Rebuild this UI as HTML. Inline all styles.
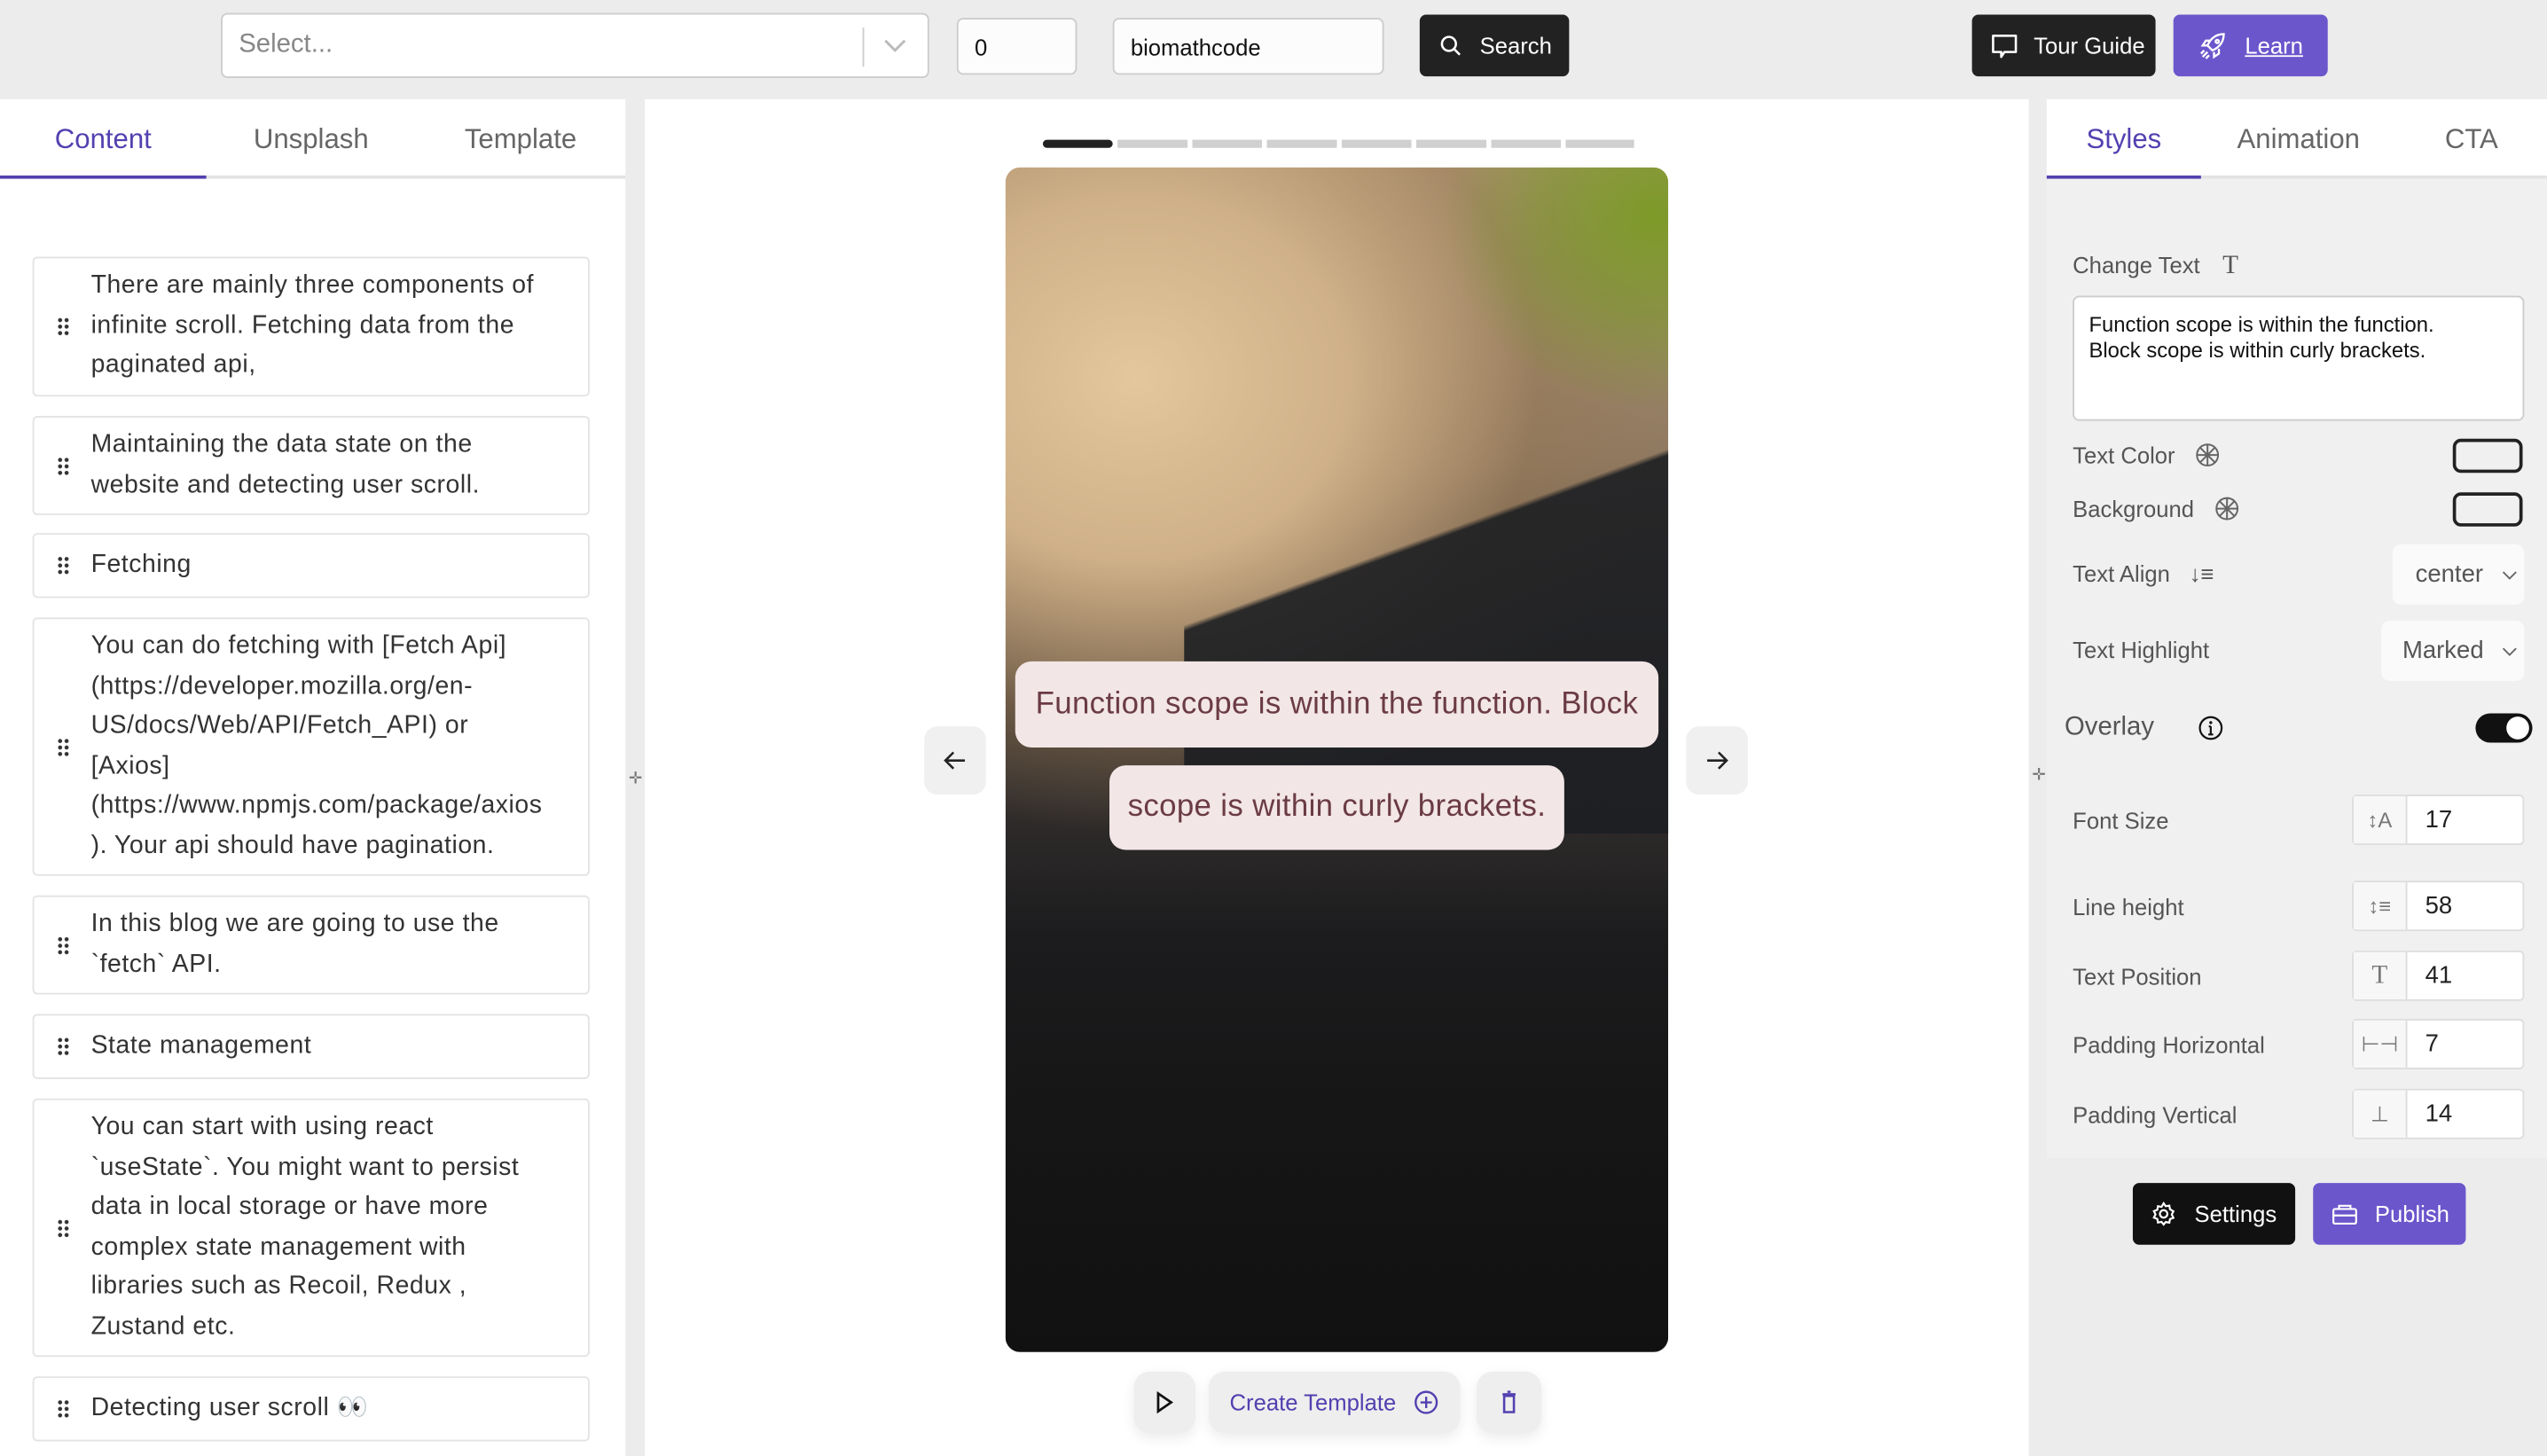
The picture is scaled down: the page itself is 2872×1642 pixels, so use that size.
<!DOCTYPE html>
<html><head><meta charset="utf-8">
<style>
*{box-sizing:border-box;margin:0;padding:0}
html,body{width:2872px;height:1642px;overflow:hidden;background:#ececec}
#root{width:1568px;height:896px;transform:scale(1.83163,1.8326);transform-origin:0 0;position:relative;font-family:"Liberation Sans",Arial,sans-serif;background:#ececec;color:#222}
.abs{position:absolute}
.inp{position:absolute;background:#fff;border:1px solid #ccc;border-radius:4px;font-size:14px;display:flex;align-items:center;padding-left:10px}
.btn{position:absolute;border-radius:4px;display:flex;align-items:center;font-size:14px;color:#fff}
.tabs{display:flex;font-size:17px;color:#666}
.card{position:absolute;left:20px;width:343px;background:#fff;border:1px solid #e3e3e3;border-radius:3px;font-size:15.5px;line-height:24.5px;color:#333;padding:4px 8px 4px 35px;display:flex;align-items:center;letter-spacing:.3px;white-space:nowrap}
.card .h{position:absolute;left:14px;top:50%;margin-top:-6px;width:8px;height:12px;background:radial-gradient(circle,#333 1.1px,transparent 1.4px) 0 0/4px 4px}
.lbl{position:absolute;left:1276px;font-size:14px;color:#555}
.nb{position:absolute;left:1448px;width:106px;height:31px;border:1px solid #ddd;background:#fff;border-radius:3px;display:flex;font-size:15px}
.nb .ic{width:33px;border-right:1px solid #ddd;display:flex;align-items:center;justify-content:center;color:#777;font-size:13px;background:#f7f7f7}
.nb .v{padding-left:11px;display:flex;align-items:center;color:#222}
.sw{position:absolute;left:1510px;width:43px;height:21px;border:2px solid #222;border-radius:5px}
.sel{position:absolute;background:#fafafa;border-radius:5px;font-size:15px;color:#555;display:flex;align-items:center}
</style></head><body><div id="root">

<div class="inp" style="left:136px;top:8px;width:436px;height:40px;color:#888;font-size:16px">Select...</div>
<div class="abs" style="left:531px;top:17px;width:1px;height:24px;background:#ccc"></div>
<svg class="abs" style="left:543px;top:22px" width="16" height="12" viewBox="0 0 16 12"><path d="M2 3l6 6 6-6" fill="none" stroke="#bbb" stroke-width="1.6"/></svg>
<div class="inp" style="left:589px;top:11px;width:74px;height:35px;color:#111;background:#fcfcfc">0</div>
<div class="inp" style="left:685px;top:11px;width:167px;height:35px;color:#111;background:#fcfcfc">biomathcode</div>
<div class="btn" style="left:874px;top:9px;width:92px;height:38px;background:#222;padding-left:12px">
<svg width="14" height="14" viewBox="0 0 14 14"><circle cx="6" cy="6" r="4.3" fill="none" stroke="#fff" stroke-width="1.4"/><path d="M9.2 9.2l3.5 3.5" stroke="#fff" stroke-width="1.4"/></svg><span style="margin-left:11px">Search</span></div>
<div class="btn" style="left:1214px;top:9px;width:113px;height:38px;background:#222;padding-left:11px">
<svg width="18" height="18" viewBox="0 0 18 18"><path d="M2 3h14v10H9l-2 3v-3H2z" fill="none" stroke="#fff" stroke-width="1.4" stroke-linejoin="round"/></svg><span style="margin-left:9px">Tour Guide</span></div>
<div class="btn" style="left:1338px;top:9px;width:95px;height:38px;background:#6b56cc;padding-left:16px">
<svg width="18" height="18" viewBox="0 0 18 18" fill="none" stroke="#fff" stroke-width="1.3"><path d="M7 11l-2-2c2-5 6-7 10-7 0 4-2 8-7 10z"/><circle cx="11" cy="6.5" r="1"/><path d="M5 9H2l2-3h3M9 13v3l3-2v-3M2 16l3-3M4 17l2-2M1 14l2-2"/></svg><span style="margin-left:10px;text-decoration:underline">Learn</span></div>

<div class="abs" style="left:0;top:61px;width:385px;height:835px;background:#fff"></div>
<div class="abs tabs" style="left:0;top:61px;width:385px;height:49px;border-bottom:2px solid #e3e3e3">
<div style="width:127px;text-align:center;padding-top:15px;color:#5340b0;border-bottom:2px solid #5340b0;margin-bottom:-2px">Content</div>
<div style="width:129px;text-align:center;padding-top:15px">Unsplash</div>
<div style="width:129px;text-align:center;padding-top:15px">Template</div></div>
<div class="card" style="top:158px;height:86px"><div class="h"></div><div>There are mainly three components of<br>infinite scroll. Fetching data from the<br>paginated api,</div></div>
<div class="card" style="top:256px;height:61px"><div class="h"></div><div>Maintaining the data state on the<br>website and detecting user scroll.</div></div>
<div class="card" style="top:328px;height:40px"><div class="h"></div>Fetching</div>
<div class="card" style="top:380px;height:159px"><div class="h"></div><div>You can do fetching with [Fetch Api]<br>(https://developer.mozilla.org/en-<br>US/docs/Web/API/Fetch_API) or<br>[Axios]<br>(https://www.npmjs.com/package/axios<br>). Your api should have pagination.</div></div>
<div class="card" style="top:551px;height:61px"><div class="h"></div><div>In this blog we are going to use the<br>`fetch` API.</div></div>
<div class="card" style="top:624px;height:40px"><div class="h"></div>State management</div>
<div class="card" style="top:676px;height:159px"><div class="h"></div><div>You can start with using react<br>`useState`. You might want to persist<br>data in local storage or have more<br>complex state management with<br>libraries such as Recoil, Redux ,<br>Zustand etc.</div></div>
<div class="card" style="top:847px;height:40px"><div class="h"></div>Detecting user scroll 👀</div>
<div class="abs" style="left:387px;top:474px;font-size:10px;color:#777">✛</div>

<div class="abs" style="left:397px;top:61px;width:852px;height:835px;background:#fff"></div>
<div class="abs" style="left:642px;top:86px;width:43px;height:5px;border-radius:3px;background:#222"></div>
<div class="abs" style="left:688px;top:86px;width:318px;height:5px;background:repeating-linear-gradient(90deg,#d0d0d0 0 43px,transparent 43px 46px)"></div>
<div class="abs" style="left:619px;top:103px;width:408px;height:729px;border-radius:9px;overflow:hidden;background:
radial-gradient(ellipse 130px 120px at 400px 30px,#7d9a28 0,rgba(120,150,40,.6) 50%,transparent 100%),
radial-gradient(ellipse 330px 280px at 80px 130px,#e4c79c 0,#cfb088 40%,rgba(150,120,85,.5) 75%,transparent 100%),
linear-gradient(180deg,#b49a78 0,#8e7860 25%,#3a3431 48%,#1d1d1f 65%,#141414 100%)">
<div class="abs" style="left:110px;top:150px;width:320px;height:260px;background:linear-gradient(160deg,transparent 0 35%,#1c1e22 36%);opacity:.9"></div>
<div class="abs" style="left:0;top:430px;width:408px;height:300px;background:linear-gradient(180deg,rgba(20,20,20,0) 0,rgba(15,15,15,.6) 100%)"></div>
</div>
<div class="abs" style="left:625px;top:407px;width:396px;height:53px;background:#f2e6e6;border-radius:10px;font-size:19px;color:#6b3b44;display:flex;align-items:center;justify-content:center;letter-spacing:.2px">Function scope is within the function. Block</div>
<div class="abs" style="left:683px;top:471px;width:280px;height:52px;background:#f2e6e6;border-radius:10px;font-size:19px;color:#6b3b44;display:flex;align-items:center;justify-content:center;letter-spacing:.2px">scope is within curly brackets.</div>
<div class="abs" style="left:569px;top:447px;width:38px;height:42px;background:#f0f0f0;border-radius:8px;display:flex;align-items:center;justify-content:center"><svg width="14" height="12" viewBox="0 0 14 12"><path d="M13 6H1M6 1L1 6l5 5" fill="none" stroke="#222" stroke-width="1.4"/></svg></div>
<div class="abs" style="left:1038px;top:447px;width:38px;height:42px;background:#f0f0f0;border-radius:8px;display:flex;align-items:center;justify-content:center"><svg width="14" height="12" viewBox="0 0 14 12"><path d="M1 6h12M8 1l5 5-5 5" fill="none" stroke="#222" stroke-width="1.4"/></svg></div>
<div class="abs" style="left:698px;top:844px;width:38px;height:38px;background:#eee;border-radius:10px;display:flex;align-items:center;justify-content:center;box-shadow:0 3px 8px rgba(0,0,0,.08)"><svg width="12" height="14" viewBox="0 0 12 14"><path d="M2 1.5l8 5.5-8 5.5z" fill="none" stroke="#111" stroke-width="1.5"/></svg></div>
<div class="abs" style="left:744px;top:844px;width:155px;height:38px;background:#eee;border-radius:10px;display:flex;align-items:center;padding-left:13px;font-size:14px;color:#5340b0;box-shadow:0 3px 8px rgba(0,0,0,.08)">Create Template<svg style="margin-left:11px" width="16" height="16" viewBox="0 0 16 16"><circle cx="8" cy="8" r="6.5" fill="none" stroke="#5340b0" stroke-width="1.3"/><path d="M8 4.5v7M4.5 8h7" stroke="#5340b0" stroke-width="1.3"/></svg></div>
<div class="abs" style="left:909px;top:844px;width:40px;height:38px;background:#eee;border-radius:10px;display:flex;align-items:center;justify-content:center;box-shadow:0 3px 8px rgba(0,0,0,.08)"><svg width="12" height="16" viewBox="0 0 12 16"><path d="M3 4h6v10H3zM2 3h8M5 1.5h2" fill="none" stroke="#5340b0" stroke-width="1.4"/></svg></div>

<div class="abs" style="left:1249px;top:61px;width:319px;height:835px;background:#ececec"></div>
<div class="abs" style="left:1260px;top:61px;width:308px;height:652px;background:#f0f0f0"></div>
<div class="abs tabs" style="left:1260px;top:61px;width:308px;height:49px;background:#fff;border-bottom:2px solid #e3e3e3">
<div style="width:95px;text-align:center;padding-top:15px;color:#5340b0;border-bottom:2px solid #5340b0;margin-bottom:-2px">Styles</div>
<div style="width:120px;text-align:center;padding-top:15px">Animation</div>
<div style="width:93px;text-align:center;padding-top:15px">CTA</div></div>
<div class="abs" style="left:1251px;top:472px;font-size:10px;color:#777">✛</div>
<div class="lbl" style="top:155px">Change Text <span style="margin-left:10px;font-family:'Liberation Serif',serif;font-size:16px">T</span></div>
<div class="abs" style="left:1276px;top:182px;width:278px;height:77px;background:#fff;border:1px solid #ccc;border-radius:4px;padding:9px 9px;font-size:13px;line-height:16px;color:#111">Function scope is within the function.<br>Block scope is within curly brackets.</div>
<div class="lbl" style="top:272px">Text Color <svg style="margin-left:8px;vertical-align:-3px" width="16" height="16" viewBox="0 0 16 16" fill="none" stroke="#666" stroke-width="1.1"><circle cx="8" cy="8" r="6.5"/><path d="M8 1.5v13M1.5 8h13M3.4 3.4l9.2 9.2M12.6 3.4l-9.2 9.2"/></svg></div>
<div class="sw" style="top:270px"></div>
<div class="lbl" style="top:305px">Background <svg style="margin-left:8px;vertical-align:-3px" width="16" height="16" viewBox="0 0 16 16" fill="none" stroke="#666" stroke-width="1.1"><circle cx="8" cy="8" r="6.5"/><path d="M8 1.5v13M1.5 8h13M3.4 3.4l9.2 9.2M12.6 3.4l-9.2 9.2"/></svg></div>
<div class="sw" style="top:303px"></div>
<div class="lbl" style="top:345px">Text Align <span style="margin-left:8px">↓≡</span></div>
<div class="sel" style="left:1473px;top:335px;width:81px;height:37px;padding-left:14px">center<svg style="position:absolute;right:4px" width="10" height="8" viewBox="0 0 10 8"><path d="M1 2l4 4 4-4" fill="none" stroke="#666"/></svg></div>
<div class="lbl" style="top:392px">Text Highlight</div>
<div class="sel" style="left:1466px;top:382px;width:88px;height:37px;padding-left:13px">Marked<svg style="position:absolute;right:4px" width="10" height="8" viewBox="0 0 10 8"><path d="M1 2l4 4 4-4" fill="none" stroke="#666"/></svg></div>
<div class="lbl" style="left:1271px;top:439px;font-size:16px">Overlay</div>
<svg class="abs" style="left:1353px;top:440px" width="16" height="16" viewBox="0 0 16 16"><circle cx="8" cy="8" r="6.7" fill="none" stroke="#111" stroke-width="1.2"/><path d="M8 7v5M6.5 12h3M6.8 7H8" stroke="#111" stroke-width="1.2"/><circle cx="8" cy="4.7" r=".9" fill="#111"/></svg>
<div class="abs" style="left:1524px;top:439px;width:35px;height:18px;border-radius:9px;background:#111"><div class="abs" style="left:19px;top:2px;width:14px;height:14px;border-radius:50%;background:#fff"></div></div>
<div class="lbl" style="top:497px">Font Size</div>
<div class="nb" style="top:489px"><div class="ic">↕A</div><div class="v">17</div></div>
<div class="lbl" style="top:550px">Line height</div>
<div class="nb" style="top:542px"><div class="ic">↕≡</div><div class="v">58</div></div>
<div class="lbl" style="top:593px">Text Position</div>
<div class="nb" style="top:585px"><div class="ic" style="font-family:'Liberation Serif',serif;font-size:16px">T</div><div class="v">41</div></div>
<div class="lbl" style="top:635px">Padding Horizontal</div>
<div class="nb" style="top:627px"><div class="ic">⊢⊣</div><div class="v">7</div></div>
<div class="lbl" style="top:678px">Padding Vertical</div>
<div class="nb" style="top:670px"><div class="ic">⊥</div><div class="v">14</div></div>
<div class="btn" style="left:1313px;top:728px;width:100px;height:38px;background:#111;padding-left:11px">
<svg width="16" height="16" viewBox="0 0 16 16" fill="none" stroke="#fff" stroke-width="1.2"><circle cx="8" cy="8" r="2.3"/><path d="M8 1.5l1.3 1.8 2.2-.4.4 2.2L14 6.4l-1 2 1 2-2.1.8-.4 2.2-2.2-.4L8 14.5l-1.3-1.6-2.2.4-.4-2.2L2 10.3l1-2-1-2 2.1-.8.4-2.2 2.2.4z"/></svg><span style="margin-left:11px">Settings</span></div>
<div class="btn" style="left:1424px;top:728px;width:94px;height:38px;background:#6b56cc;padding-left:11px">
<svg width="17" height="15" viewBox="0 0 17 15" fill="none" stroke="#fff" stroke-width="1.2"><rect x="1.5" y="4" width="14" height="9" rx="1"/><path d="M5 4V2h7v2M1.5 8h14"/></svg><span style="margin-left:10px">Publish</span></div>

</div></body></html>
